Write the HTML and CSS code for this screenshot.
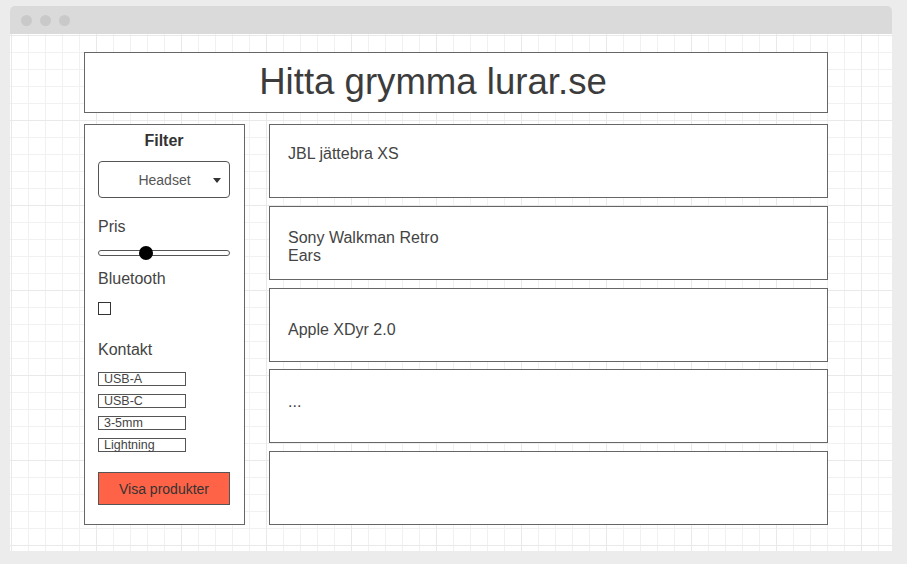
FILE: index.html
```html
<!DOCTYPE html>
<html lang="sv">
<head>
<meta charset="utf-8">
<title>Hitta grymma lurar.se</title>
<link rel="stylesheet" href="styles.css">
</head>
<body>
<div class="window">
  <div class="titlebar">
    <span class="dot"></span><span class="dot"></span><span class="dot"></span>
  </div>
  <div class="canvas">
    <div class="page">
      <header class="header"><h1 class="site-title">Hitta grymma lurar.se</h1></header>
      <div class="main">
        <aside class="filter">
          <div class="filter-title">Filter</div>
          <div class="select"><span class="select-text">Headset</span><span class="caret"></span></div>
          <div class="label label-pris">Pris</div>
          <div class="slider"><span class="thumb"></span></div>
          <div class="label label-bt">Bluetooth</div>
          <div class="checkbox"></div>
          <div class="label label-kontakt">Kontakt</div>
          <ul class="tags">
            <li class="tag">USB-A</li>
            <li class="tag">USB-C</li>
            <li class="tag">3-5mm</li>
            <li class="tag">Lightning</li>
          </ul>
          <div class="button">Visa produkter</div>
        </aside>
        <section class="products">
          <div class="card card-1"><span class="card-text">JBL jättebra XS</span></div>
          <div class="card card-2"><span class="card-text">Sony Walkman Retro Ears</span></div>
          <div class="card card-3"><span class="card-text">Apple XDyr 2.0</span></div>
          <div class="card card-4"><span class="card-text">...</span></div>
          <div class="card card-5"></div>
        </section>
      </div>
    </div>
  </div>
</div>
</body>
</html>
```
FILE: styles.css
```css
* { box-sizing: border-box; }
html, body { margin: 0; padding: 0; }
body {
  background: #ececec;
  font-family: "Liberation Sans", Arial, sans-serif;
  color: #444;
  padding: 6px 15px 13px 10px;
}
.window {
  width: 882px;
  height: 545px;
  display: flex;
  flex-direction: column;
  border-radius: 5px 5px 0 0;
  overflow: hidden;
}
.titlebar {
  height: 28px;
  background: #dadada;
  display: flex;
  align-items: center;
  padding-left: 11px;
  gap: 8px;
}
.dot {
  width: 11px;
  height: 11px;
  border-radius: 50%;
  background: #c9c9c9;
}
.canvas {
  flex: 1;
  background-color: #fff;
  background-image:
    linear-gradient(to right, #e9e9e9 1px, transparent 1px),
    linear-gradient(to bottom, #e9e9e9 1px, transparent 1px),
    linear-gradient(to right, #f1f1f1 1px, transparent 1px),
    linear-gradient(to bottom, #f1f1f1 1px, transparent 1px);
  background-size: 85px 85px, 85px 85px, 17px 17px, 17px 17px;
  background-position: 1px 1px, 1px 1px, 1px 1px, 1px 1px;
  padding: 18px 0 0 74px;
}
.page { width: 744px; }
.header {
  height: 61px;
  border: 1px solid #666;
  background: #fff;
  display: flex;
  align-items: center;
  justify-content: center;
}
.site-title {
  margin: 0 46px 2px 0;
  font-size: 36.6px;
  font-weight: normal;
  color: #3c3c3c;
  line-height: 40px;
}
.main {
  display: flex;
  gap: 24px;
  margin-top: 11px;
  height: 401px;
}
.filter {
  width: 161px;
  border: 1px solid #666;
  background: #fff;
  padding: 7px 14px 0 13px;
  display: flex;
  flex-direction: column;
}
.filter-title {
  font-weight: bold;
  font-size: 16px;
  line-height: 18px;
  text-align: center;
  color: #333;
}
.select {
  margin-top: 11px;
  height: 37px;
  border: 1px solid #555;
  border-radius: 4px;
  position: relative;
  display: flex;
  align-items: center;
  justify-content: center;
}
.select-text { font-size: 14px; color: #555; margin-left: 1px; }
.caret {
  position: absolute;
  right: 8px;
  top: 16px;
  width: 0;
  height: 0;
  border-left: 4px solid transparent;
  border-right: 4px solid transparent;
  border-top: 5px solid #333;
}
.label { font-size: 16px; line-height: 18px; color: #444; }
.label-pris { margin-top: 20px; }
.slider {
  margin-top: 14px;
  height: 6px;
  border: 1px solid #555;
  border-radius: 3px;
  position: relative;
}
.thumb {
  position: absolute;
  left: 40px;
  top: -5px;
  width: 14px;
  height: 14px;
  border-radius: 50%;
  background: #000;
}
.label-bt { margin-top: 14px; }
.checkbox {
  margin-top: 14px;
  width: 13px;
  height: 13px;
  border: 1px solid #333;
}
.label-kontakt { margin-top: 26px; }
.tags {
  list-style: none;
  margin: 13px 0 0;
  padding: 0;
  display: flex;
  flex-direction: column;
  gap: 8px;
}
.tag {
  width: 88px;
  height: 14px;
  border: 1px solid #555;
  font-size: 12.5px;
  line-height: 12px;
  padding-left: 5px;
  color: #444;
}
.button {
  margin-top: 20px;
  height: 33px;
  background: #ff6347;
  border: 1px solid #555;
  display: flex;
  align-items: center;
  justify-content: center;
  font-size: 14px;
  color: #333;
}
.products {
  width: 559px;
  display: flex;
  flex-direction: column;
  justify-content: space-between;
}
.card {
  height: 74px;
  border: 1px solid #666;
  background: #fff;
  padding-left: 18px;
  font-size: 16px;
  line-height: 18px;
  color: #444;
}
.card-text { display: block; max-width: 165px; }
.card-1 { padding-top: 20px; }
.card-2 { padding-top: 22px; }
.card-3 { padding-top: 32px; }
.card-4 { padding-top: 23px; }
```
